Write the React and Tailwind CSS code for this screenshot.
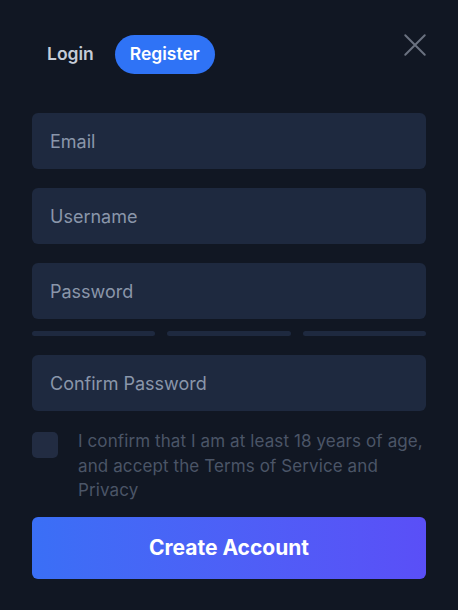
import { useState } from 'react';

function Field({ placeholder, type = 'text' }) {
  return (
    <input
      type={type}
      placeholder={placeholder}
      className="w-full h-[56px] rounded-md bg-[#1e293f] px-[18px] text-[18px] text-slate-200 placeholder:text-[#8a96aa] outline-none"
    />
  );
}

export default function App() {
  const [tab, setTab] = useState('register');
  const [agree, setAgree] = useState(false);

  return (
    <div className="min-h-[610px] w-full bg-[#111723] px-8 pt-[35px] pb-8 font-['Inter','Lato',sans-serif]">
      {/* Header */}
      <div className="flex items-start justify-between">
        <div className="flex items-center gap-[21px] pl-[15px]">
          <button
            onClick={() => setTab('login')}
            className="text-[17.5px] font-semibold text-[#c5ccd8]"
          >
            Login
          </button>
          <button
            onClick={() => setTab('register')}
            className="h-[39px] rounded-full bg-[#2f73f6] px-[15px] text-[17.5px] font-semibold text-white"
          >
            Register
          </button>
        </div>
        <button className="mr-[-2px] -mt-[3px] text-[#6b7280]" title="Close">
          <svg width="26" height="26" viewBox="0 0 24 24" fill="none" stroke="currentColor" strokeWidth="1.8" strokeLinecap="round">
            <path d="M3 3L21 21M21 3L3 21" />
          </svg>
        </button>
      </div>

      {/* Form */}
      <div className="mt-[39px] flex flex-col">
        <Field placeholder="Email" />
        <div className="mt-[19px]">
          <Field placeholder="Username" />
        </div>
        <div className="mt-[19px]">
          <Field placeholder="Password" type="password" />
        </div>
        <div className="mt-[12px] grid grid-cols-3 gap-[12px]">
          <div className="h-[5px] rounded-full bg-[#1e293f]" />
          <div className="h-[5px] rounded-full bg-[#1e293f]" />
          <div className="h-[5px] rounded-full bg-[#1e293f]" />
        </div>
        <div className="mt-[19px]">
          <Field placeholder="Confirm Password" type="password" />
        </div>

        <label className="mt-[18px] flex items-start gap-[20px] cursor-pointer">
          <span
            onClick={() => setAgree(!agree)}
            className="mt-[3px] h-[26px] w-[26px] shrink-0 rounded-[5px] bg-[#222c42]"
          />
          <span className="text-[17px] tracking-[0.1px] leading-[24.5px] text-[#4b5567]">
            I confirm that I am at least 18 years of age, and accept the Terms of Service and Privacy
          </span>
        </label>

        <button className="mt-[14px] h-[62px] w-full rounded-md bg-gradient-to-r from-[#3a6ff6] to-[#5a4ff7] text-[21px] font-bold text-white">
          Create Account
        </button>
      </div>
    </div>
  );
}
